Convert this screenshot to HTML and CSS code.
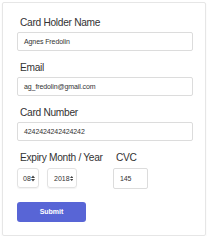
FILE: index.html
```html
<!DOCTYPE html>
<html>
<head>
<meta charset="utf-8">
<link rel="stylesheet" href="styles.css">
</head>
<body>
<div class="card">
  <div class="group">
    <div class="label">Card Holder Name</div>
    <div class="input">Agnes Fredolin</div>
  </div>
  <div class="group">
    <div class="label">Email</div>
    <div class="input">ag_fredolin@gmail.com</div>
  </div>
  <div class="group">
    <div class="label">Card Number</div>
    <div class="input">4242424242424242</div>
  </div>
  <div class="row">
    <div class="col-exp">
      <div class="label">Expiry Month / Year</div>
      <div class="selects">
        <div class="select sel-month"><span>08</span><svg class="arr" width="4" height="7" viewBox="0 0 4 7"><path d="M0 3 L2 0.5 L4 3 Z M0 4 L2 6.5 L4 4 Z" fill="#444"/></svg></div>
        <div class="select sel-year"><span>2018</span><svg class="arr" width="4" height="7" viewBox="0 0 4 7"><path d="M0 3 L2 0.5 L4 3 Z M0 4 L2 6.5 L4 4 Z" fill="#444"/></svg></div>
      </div>
    </div>
    <div class="col-cvc">
      <div class="label">CVC</div>
      <div class="input cvc">145</div>
    </div>
  </div>
  <div class="btn">Submit</div>
</div>
</body>
</html>
```
FILE: styles.css
```css
html, body {
  margin: 0;
  padding: 0;
  background: #fff;
}
body {
  font-family: "Liberation Sans", Arial, sans-serif;
}
.card {
  margin: 2px 0 0 2px;
  width: 204px;
  height: 234px;
  box-sizing: border-box;
  border: 1px solid #e6e6e6;
  border-radius: 2px;
  box-shadow: 0 1px 2px rgba(0,0,0,0.06);
  padding: 13px 0 0 14px;
}
.group {
  margin-bottom: 10px;
}
.label {
  font-size: 10.2px;
  letter-spacing: -0.3px;
  line-height: 14px;
  color: #333;
  padding-left: 3px;
  margin-bottom: 2px;
  white-space: nowrap;
}
.input {
  width: 176px;
  height: 19px;
  box-sizing: border-box;
  border: 1px solid #dcdcdc;
  border-radius: 2px;
  font-size: 7px;
  line-height: 17px;
  padding-left: 6px;
  color: #333;
  letter-spacing: -0.1px;
}
.row {
  display: flex;
}
.col-exp {
  width: 96px;
}
.selects {
  display: flex;
  gap: 8px;
  margin-top: 3px;
}
.select {
  height: 20px;
  box-sizing: border-box;
  border: 1px solid #e2e2e2;
  border-radius: 3px;
  box-shadow: 0 1px 1px rgba(0,0,0,0.05);
  display: flex;
  align-items: center;
  justify-content: space-between;
  font-size: 7px;
  color: #333;
  padding: 0 3px 0 5px;
}
.sel-month { width: 22px; }
.sel-year { width: 30px; padding-left: 6px; }
.input.cvc {
  width: 35px;
  height: 21px;
  line-height: 19px;
  margin-top: 3px;
}
.btn {
  margin-top: 13px;
  width: 69px;
  height: 20px;
  background: #5865d6;
  border-radius: 3px;
  color: #fff;
  font-size: 7px;
  font-weight: bold;
  line-height: 20px;
  text-align: center;
}
```
